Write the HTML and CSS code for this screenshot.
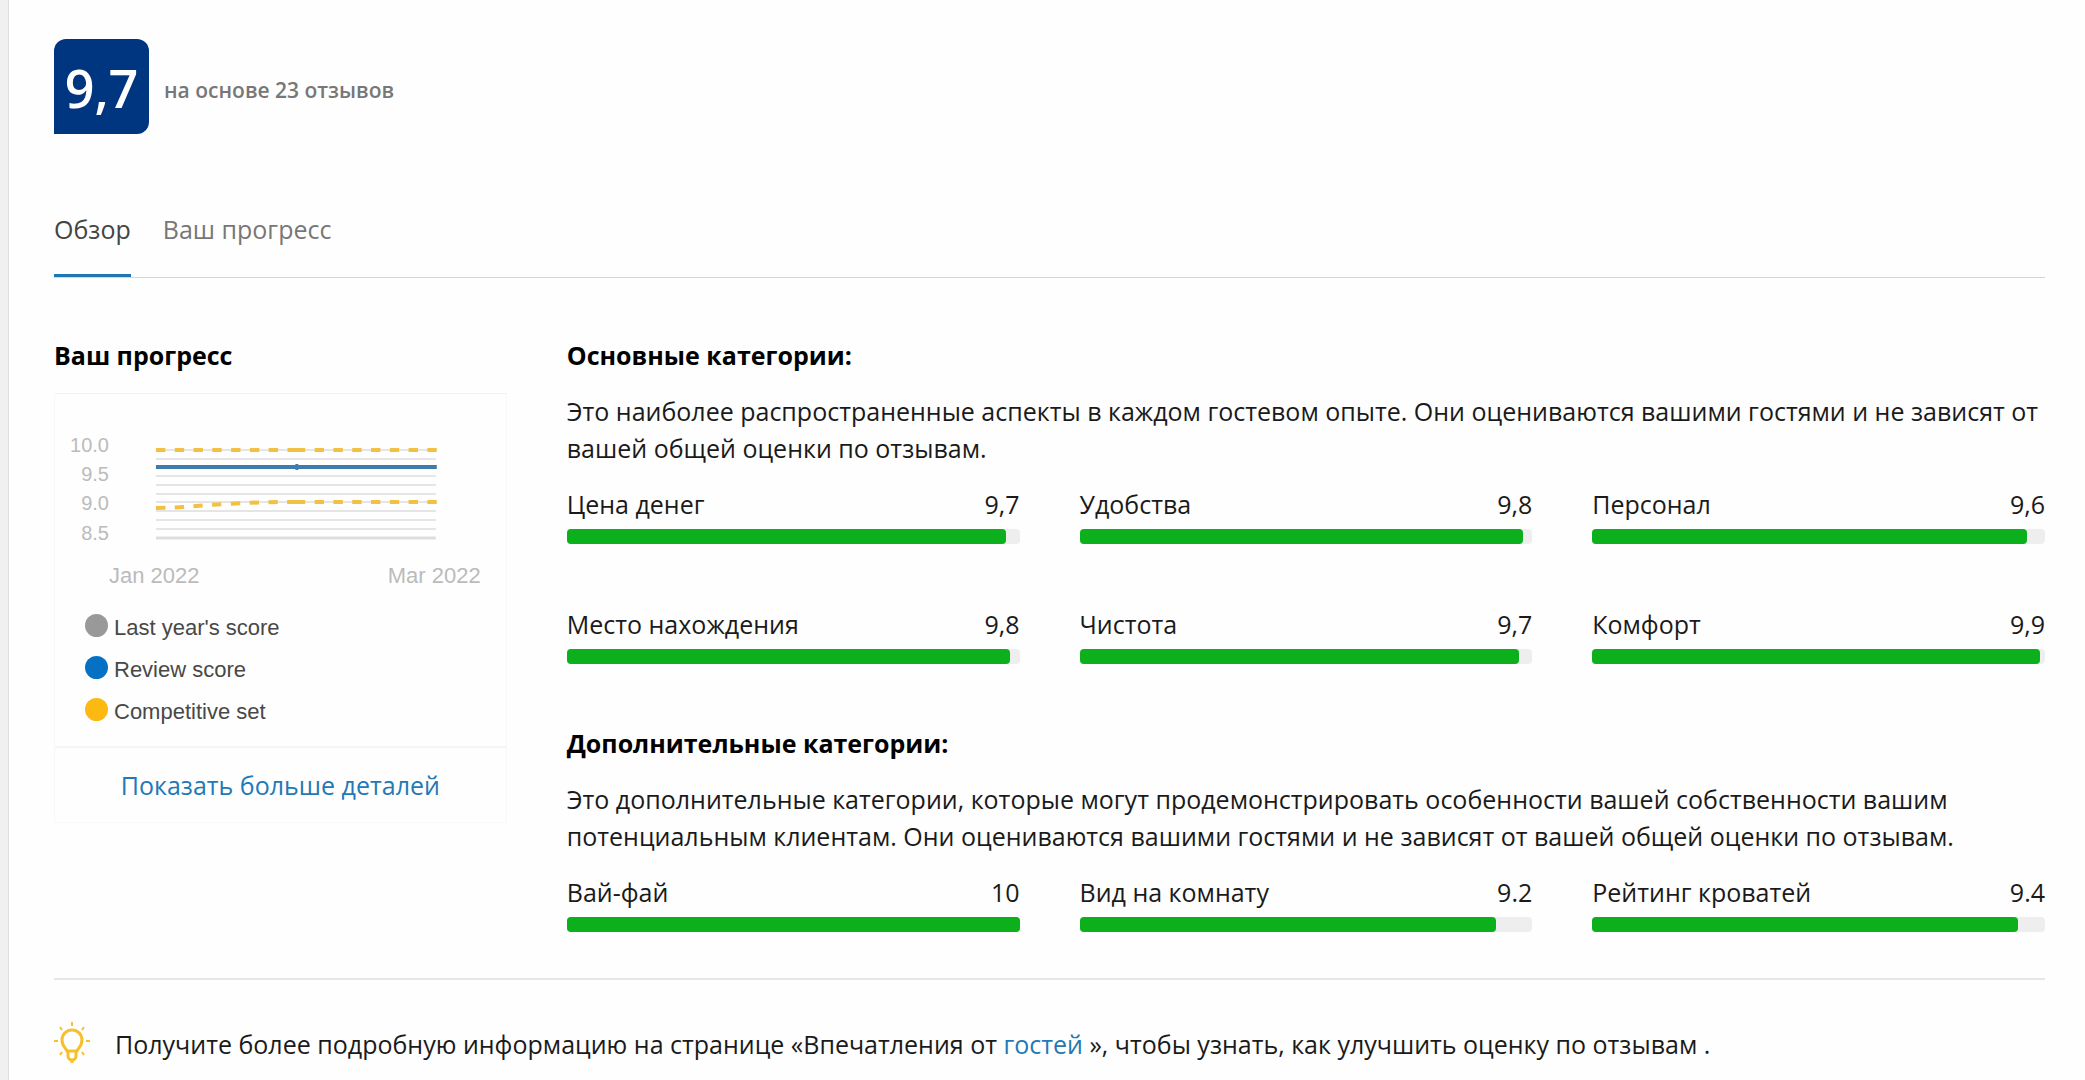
FILE: index.html
```html
<!DOCTYPE html>
<html lang="ru">
<head>
<meta charset="utf-8">
<title>Отзывы</title>
<link rel="stylesheet" href="styles.css">
</head>
<body>
<main class="page">
	<header class="score">
		<div class="badge">9,7</div>
		<div class="based">на основе 23 отзывов</div>
	</header>
	<nav class="tabs">
		<a href="#overview" class="tab selected">Обзор</a>
		<a href="#progress" class="tab">Ваш прогресс</a>
	</nav>
	<div class="columns" id="overview">
		<section class="progress" id="progress">
			<h2>Ваш прогресс</h2>
			<div class="card">
				<div class="chart">
					<svg width="451" height="206" viewBox="0 0 451 206">
						<g class="grid">
							<path d="M101 56H381M101 65H381M101 73H381M101 82H381M101 91H381M101 100H381M101 108H381M101 117H381M101 126H381M101 135H381"/>
							<path class="base" d="M101 144H381"/>
						</g>
						<g class="competitive">
							<path d="M101 56H242"/>
							<path d="M382 56H241"/>
							<path d="M101 114C140 114 160 108 242 108"/>
							<path d="M382 108H241"/>
						</g>
						<path class="review" d="M101 73H382"/>
						<path class="point" d="M242 70V76"/>
						<g class="axis">
							<text class="y" x="54" y="58">10.0</text>
							<text class="y" x="54" y="87">9.5</text>
							<text class="y" x="54" y="116">9.0</text>
							<text class="y" x="54" y="146">8.5</text>
							<text x="54" y="189">Jan 2022</text>
							<text x="333" y="189">Mar 2022</text>
						</g>
					</svg>
				</div>
				<ul class="legend">
					<li><span class="dot last"></span>Last year's score</li>
					<li><span class="dot own"></span>Review score</li>
					<li><span class="dot set"></span>Competitive set</li>
				</ul>
				<a href="#details" class="more">Показать больше деталей</a>
			</div>
		</section>
		<div class="categories">
			<section>
				<h2>Основные категории:</h2>
				<p>Это наиболее распространенные аспекты в каждом гостевом опыте. Они оцениваются вашими гостями и не зависят от вашей общей оценки по отзывам.</p>
				<div class="bars">
					<div class="item">
						<div class="label"><span>Цена денег</span><span>9,7</span></div>
						<div class="bar"><div class="fill" style="width: 97%"></div></div>
					</div>
					<div class="item">
						<div class="label"><span>Удобства</span><span>9,8</span></div>
						<div class="bar"><div class="fill" style="width: 98%"></div></div>
					</div>
					<div class="item">
						<div class="label"><span>Персонал</span><span>9,6</span></div>
						<div class="bar"><div class="fill" style="width: 96%"></div></div>
					</div>
					<div class="item">
						<div class="label"><span>Место нахождения</span><span>9,8</span></div>
						<div class="bar"><div class="fill" style="width: 98%"></div></div>
					</div>
					<div class="item">
						<div class="label"><span>Чистота</span><span>9,7</span></div>
						<div class="bar"><div class="fill" style="width: 97%"></div></div>
					</div>
					<div class="item">
						<div class="label"><span>Комфорт</span><span>9,9</span></div>
						<div class="bar"><div class="fill" style="width: 99%"></div></div>
					</div>
				</div>
			</section>
			<section>
				<h2>Дополнительные категории:</h2>
				<p>Это дополнительные категории, которые могут продемонстрировать особенности вашей собственности вашим потенциальным клиентам. Они оцениваются вашими гостями и не зависят от вашей общей оценки по отзывам.</p>
				<div class="bars">
					<div class="item">
						<div class="label"><span>Вай-фай</span><span>10</span></div>
						<div class="bar"><div class="fill" style="width: 100%"></div></div>
					</div>
					<div class="item">
						<div class="label"><span>Вид на комнату</span><span>9.2</span></div>
						<div class="bar"><div class="fill" style="width: 92%"></div></div>
					</div>
					<div class="item">
						<div class="label"><span>Рейтинг кроватей</span><span>9.4</span></div>
						<div class="bar"><div class="fill" style="width: 94%"></div></div>
					</div>
				</div>
			</section>
		</div>
	</div>
	<footer class="tip">
		<svg class="bulb" width="36" height="44" viewBox="0 0 36 44">
			<path d="M13 29C13 27 8 25 8 18a10 10 0 0 1 20 0C28 25 23 27 23 29Z"/>
			<path d="M14 30V34A4 4 0 0 0 22 34V30M18 38V41"/>
			<path class="rays" d="M18 0V4M6 5L8 8M30 5L28 8M0 19H4M32 19H36M6 33L8 30M30 33L28 30"/>
		</svg>
		<div>Получите более подробную информацию на странице «Впечатления от <a href="#guests">гостей</a> », чтобы узнать, как улучшить оценку по отзывам .</div>
	</footer>
</main>
</body>
</html>
```
FILE: styles.css
```css
html,body {
	margin: 0;
	padding: 0;
}
body {
	padding-left: 8px;
	background: #f0f0f0;
	font-family: "Open Sans", "Noto Sans", sans-serif;
	font-size: 25px;
	line-height: 37px;
	color: #1a1a1a;
}
h2,p,ul {
	margin: 0;
	padding: 0;
}
h2 {
	font-size: 25px;
	font-weight: 700;
	color: #000;
	margin-bottom: 19px;
}
a {
	color: #2379b5;
	text-decoration: none;
}
.page {
	box-sizing: border-box;
	min-height: 100vh;
	padding: 39px 40px 16px 45px;
	background: #fefefe;
	border-left: 1px #ddd solid;
}

.score {
	display: flex;
	align-items: center;
	gap: 15px;
	margin-bottom: 77px;
}
.badge {
	width: 95px;
	height: 95px;
	line-height: 98px;
	border-radius: 12px 12px 12px 0;
	background: #003580;
	color: #fff;
	font-size: 52px;
	font-weight: 600;
	text-align: center;
}
.based {
	margin-top: 8px;
	font-size: 21px;
	font-weight: 600;
	color: #777;
}

.tabs {
	display: flex;
	gap: 32px;
	border-bottom: 1px #d6d6d6 solid;
	margin-bottom: 59px;
}
.tab {
	padding-bottom: 26px;
	border-bottom: 3px transparent solid;
	color: #777;
}
.tab.selected {
	color: #444;
	border-bottom-color: #1f76b4;
}

.columns {
	display: grid;
	grid-template-columns: repeat(4, 1fr);
	gap: 60px;
}
.categories {
	grid-column: span 3;
	display: flex;
	flex-direction: column;
	gap: 61px;
}

.card {
	border: 1px #f8f8f8 solid;
	border-top-color: #f2f2f2;
}
.chart svg {
	display: block;
	max-width: 100%;
}
.grid path {
	fill: none;
	stroke: #ddd;
	stroke-width: 1.5;
}
.grid .base {
	stroke-width: 3;
}
.competitive path {
	fill: none;
	stroke: #f2c144;
	stroke-width: 4;
	stroke-dasharray: 9.4 9.4;
}
.review {
	fill: none;
	stroke: #3f7cac;
	stroke-width: 4;
}
.point {
	stroke: #3f7cac;
	stroke-width: 3;
}
.axis text {
	font: 22px "Liberation Sans", Arial, sans-serif;
	fill: #bbb;
}
.axis .y {
	font-size: 20px;
	text-anchor: end;
}
.legend {
	list-style: none;
	padding: 7px 0 13px 30px;
	font: 22px/42px "Liberation Sans", Arial, sans-serif;
	color: #484848;
}
.legend li {
	display: flex;
	align-items: center;
	gap: 6px;
}
.dot {
	width: 23px;
	height: 23px;
	margin-bottom: 6px;
	border-radius: 50%;
}
.dot.last {
	background: #999;
}
.dot.own {
	background: #0571c4;
}
.dot.set {
	background: #fbb911;
}
.more {
	display: block;
	padding: 19px 0 18px;
	border-top: 2px #f5f5f5 solid;
	text-align: center;
}

.bars {
	display: grid;
	grid-template-columns: repeat(3, 1fr);
	gap: 62px 60px;
	margin-top: 19px;
}
.label {
	display: flex;
	justify-content: space-between;
	margin-bottom: 6px;
}
.bar {
	height: 15px;
	border-radius: 4px;
	background: #eee;
}
.fill {
	height: 100%;
	border-radius: 4px;
	background: #0bb01c;
}

.tip {
	display: flex;
	align-items: center;
	gap: 25px;
	margin-top: 46px;
	padding-top: 42px;
	border-top: 2px #e6e6e6 solid;
}
.bulb {
	flex: none;
	fill: none;
	stroke: #f6c02c;
	stroke-width: 3;
}
.bulb .rays {
	stroke-width: 2;
}
```
